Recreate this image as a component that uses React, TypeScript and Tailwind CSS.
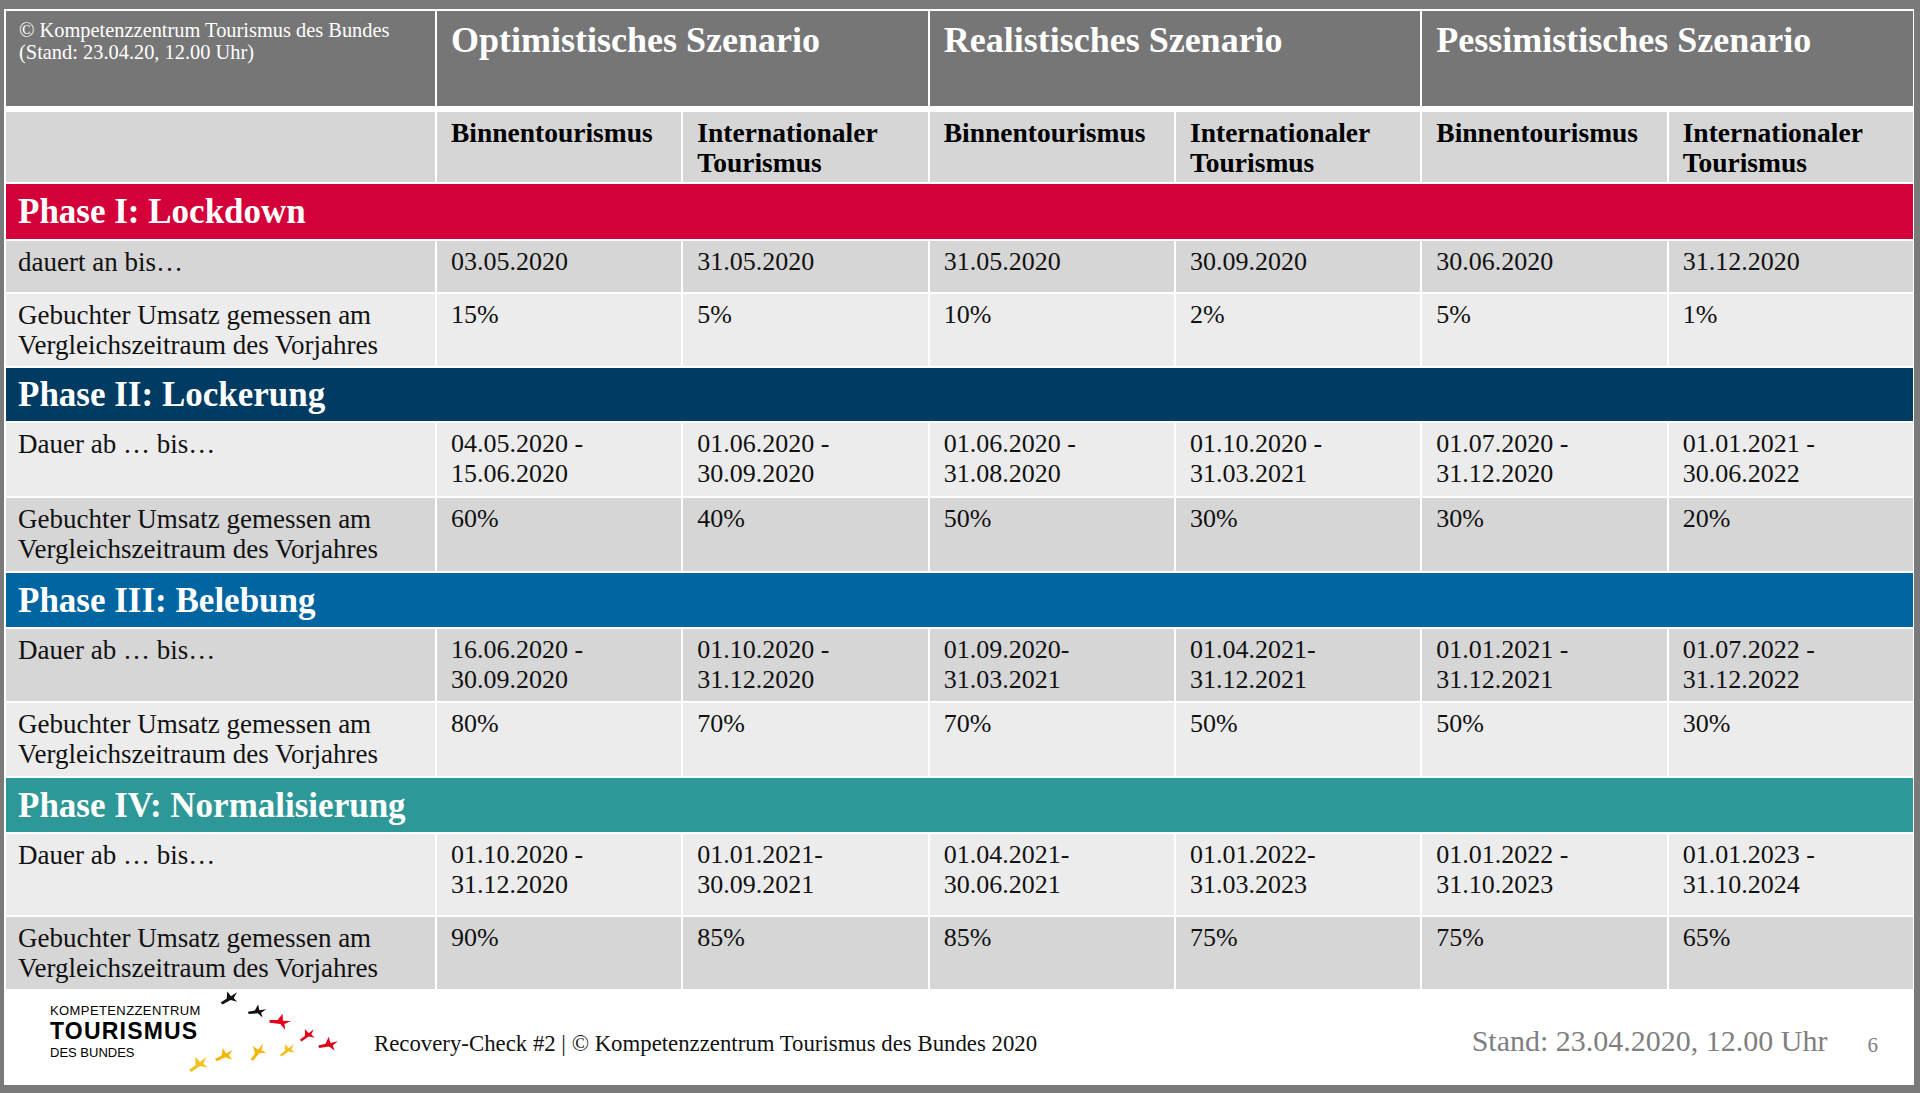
import React from 'react';

type Row = { label: string[]; values: string[][]; tone: 'dark' | 'light'; h: string };
type Phase = { title: string; color: string; h: string; rows: Row[] };

const umsatz = ['Gebuchter Umsatz gemessen am', 'Vergleichszeitraum des Vorjahres'];

const phases: Phase[] = [
  {
    title: 'Phase I: Lockdown',
    color: 'bg-[#d30039]',
    h: 'h-[55px]',
    rows: [
      {
        label: ['dauert an bis…'],
        values: [['03.05.2020'], ['31.05.2020'], ['31.05.2020'], ['30.09.2020'], ['30.06.2020'], ['31.12.2020']],
        tone: 'dark',
        h: 'h-[51px]',
      },
      {
        label: umsatz,
        values: [['15%'], ['5%'], ['10%'], ['2%'], ['5%'], ['1%']],
        tone: 'light',
        h: 'h-[72px]',
      },
    ],
  },
  {
    title: 'Phase II: Lockerung',
    color: 'bg-[#003b63]',
    h: 'h-[53px]',
    rows: [
      {
        label: ['Dauer ab … bis…'],
        values: [
          ['04.05.2020 -', '15.06.2020'],
          ['01.06.2020 -', '30.09.2020'],
          ['01.06.2020 -', '31.08.2020'],
          ['01.10.2020 -', '31.03.2021'],
          ['01.07.2020 -', '31.12.2020'],
          ['01.01.2021 -', '30.06.2022'],
        ],
        tone: 'light',
        h: 'h-[73px]',
      },
      {
        label: umsatz,
        values: [['60%'], ['40%'], ['50%'], ['30%'], ['30%'], ['20%']],
        tone: 'dark',
        h: 'h-[73px]',
      },
    ],
  },
  {
    title: 'Phase III: Belebung',
    color: 'bg-[#0065a1]',
    h: 'h-[54px]',
    rows: [
      {
        label: ['Dauer ab … bis…'],
        values: [
          ['16.06.2020 -', '30.09.2020'],
          ['01.10.2020 -', '31.12.2020'],
          ['01.09.2020-', '31.03.2021'],
          ['01.04.2021-', '31.12.2021'],
          ['01.01.2021 -', '31.12.2021'],
          ['01.07.2022 -', '31.12.2022'],
        ],
        tone: 'dark',
        h: 'h-[72px]',
      },
      {
        label: umsatz,
        values: [['80%'], ['70%'], ['70%'], ['50%'], ['50%'], ['30%']],
        tone: 'light',
        h: 'h-[73px]',
      },
    ],
  },
  {
    title: 'Phase IV: Normalisierung',
    color: 'bg-[#2e9797]',
    h: 'h-[54px]',
    rows: [
      {
        label: ['Dauer ab … bis…'],
        values: [
          ['01.10.2020 -', '31.12.2020'],
          ['01.01.2021-', '30.09.2021'],
          ['01.04.2021-', '30.06.2021'],
          ['01.01.2022-', '31.03.2023'],
          ['01.01.2022 -', '31.10.2023'],
          ['01.01.2023 -', '31.10.2024'],
        ],
        tone: 'light',
        h: 'h-[81px]',
      },
      {
        label: umsatz,
        values: [['90%'], ['85%'], ['85%'], ['75%'], ['75%'], ['65%']],
        tone: 'dark',
        h: 'h-[72px]',
      },
    ],
  },
];

const scenarios = ['Optimistisches Szenario', 'Realistisches Szenario', 'Pessimistisches Szenario'];

const Lines = ({ lines }: { lines: string[] }) => (
  <>
    {lines.map((l, i) => (
      <div key={i} className="whitespace-nowrap">
        {l}
      </div>
    ))}
  </>
);

// one small bird of the flock, drawn around 0,0
const Bird = ({ x, y, r, s, fill }: { x: number; y: number; r: number; s: number; fill: string }) => (
  <path
    transform={`translate(${x} ${y}) rotate(${r}) scale(${s})`}
    d="M-8,2 L-2,0 L0,-6 L2,-1 L8,-3 L4,1 L6,5 L1,2 L-7,4 Z"
    fill={fill}
  />
);

const Logo = () => (
  <div className="relative w-[300px] h-[95px]">
    <div className="absolute left-[44px] top-[14px] text-black" style={{ fontFamily: '"Liberation Sans", Arial, sans-serif' }}>
      <div className="text-[13px] leading-[15px] tracking-[0.4px]">KOMPETENZZENTRUM</div>
      <div className="text-[23px] leading-[26px] font-bold tracking-[1.2px]">TOURISMUS</div>
      <div className="text-[13px] leading-[15px] mt-[1px]">DES BUNDES</div>
    </div>
    <svg className="absolute left-[181px] top-0" width="160" height="86" viewBox="0 0 160 86">
      <Bird x={42} y={9} r={-15} s={1.15} fill="#111111" />
      <Bird x={70} y={22} r={10} s={1.1} fill="#111111" />
      <Bird x={93} y={32} r={20} s={1.3} fill="#e2001a" />
      <Bird x={120} y={46} r={-20} s={1.05} fill="#e2001a" />
      <Bird x={141} y={55} r={5} s={1.2} fill="#e2001a" />
      <Bird x={100} y={61} r={-20} s={1.05} fill="#f4c01e" />
      <Bird x={70} y={63} r={-35} s={1.2} fill="#f2b705" />
      <Bird x={37} y={66} r={-10} s={1.2} fill="#f2b705" />
      <Bird x={11} y={75} r={-20} s={1.3} fill="#f4c01e" />
    </svg>
  </div>
);

export default function App() {
  return (
    <div
      className="w-[1920px] h-[1093px] bg-[#7a7a7a] pt-[9px] pl-[4px] overflow-hidden"
      style={{ fontFamily: '"Liberation Serif", "Times New Roman", serif' }}
    >
      <div className="w-[1910px] h-[1076px] bg-white p-[2px] flex flex-col">
        <div className="flex flex-col gap-[2px] w-[1907px]">
          {/* scenario header */}
          <div className="grid grid-cols-[429px_repeat(6,1fr)] gap-x-[2px] h-[95px] mb-[4px]">
            <div className="bg-[#767676] text-white text-[20.4px] leading-[22px] pl-[13px] pt-[8px]">
              <div>© Kompetenzzentrum Tourismus des Bundes</div>
              <div>(Stand: 23.04.20, 12.00 Uhr)</div>
            </div>
            {scenarios.map((s) => (
              <div key={s} className="col-span-2 bg-[#767676] text-white font-bold text-[36px] leading-[40px] pl-[14px] pt-[9px] whitespace-nowrap">
                {s}
              </div>
            ))}
          </div>

          {/* sub header */}
          <div className="grid grid-cols-[429px_repeat(6,1fr)] gap-x-[2px] h-[70px]">
            <div className="bg-[#d6d6d6]" />
            {[0, 1, 2].map((i) => (
              <React.Fragment key={i}>
                <div className="bg-[#d6d6d6] font-bold text-[27.5px] leading-[30px] pl-[14px] pt-[6px] text-black">
                  Binnentourismus
                </div>
                <div className="bg-[#d6d6d6] font-bold text-[27.5px] leading-[30px] pl-[14px] pt-[6px] text-black">
                  <div>Internationaler</div>
                  <div>Tourismus</div>
                </div>
              </React.Fragment>
            ))}
          </div>

          {phases.map((p) => (
            <React.Fragment key={p.title}>
              <div className={`${p.color} ${p.h} flex items-center pl-[12px] text-white font-bold text-[35px] leading-none`}>
                {p.title}
              </div>
              {p.rows.map((r, ri) => {
                const bg = r.tone === 'dark' ? 'bg-[#d6d6d6]' : 'bg-[#ececec]';
                return (
                  <div key={ri} className={`grid grid-cols-[429px_repeat(6,1fr)] gap-x-[2px] ${r.h}`}>
                    <div className={`${bg} text-[27px] leading-[30px] pl-[12px] pt-[6px] text-[#111]`}>
                      <Lines lines={r.label} />
                    </div>
                    {r.values.map((v, vi) => (
                      <div key={vi} className={`${bg} text-[26px] leading-[30px] pl-[14px] pt-[6px] text-[#111]`}>
                        <Lines lines={v} />
                      </div>
                    ))}
                  </div>
                );
              })}
            </React.Fragment>
          ))}
        </div>

        {/* footer */}
        <div className="flex-1 flex items-start">
          <Logo />
          <div className="ml-[68px] mt-[41px] text-[22.8px] leading-[28px] text-[#111] whitespace-nowrap">
            Recovery-Check #2 | © Kompetenzzentrum Tourismus des Bundes 2020
          </div>
          <div className="ml-auto mt-[35px] text-[30px] leading-[34px] text-[#7f7f7f] whitespace-nowrap">
            Stand: 23.04.2020, 12.00 Uhr
          </div>
          <div className="ml-[40px] mr-[34px] mt-[44px] text-[21px] leading-[24px] text-[#7f7f7f]">6</div>
        </div>
      </div>
    </div>
  );
}
